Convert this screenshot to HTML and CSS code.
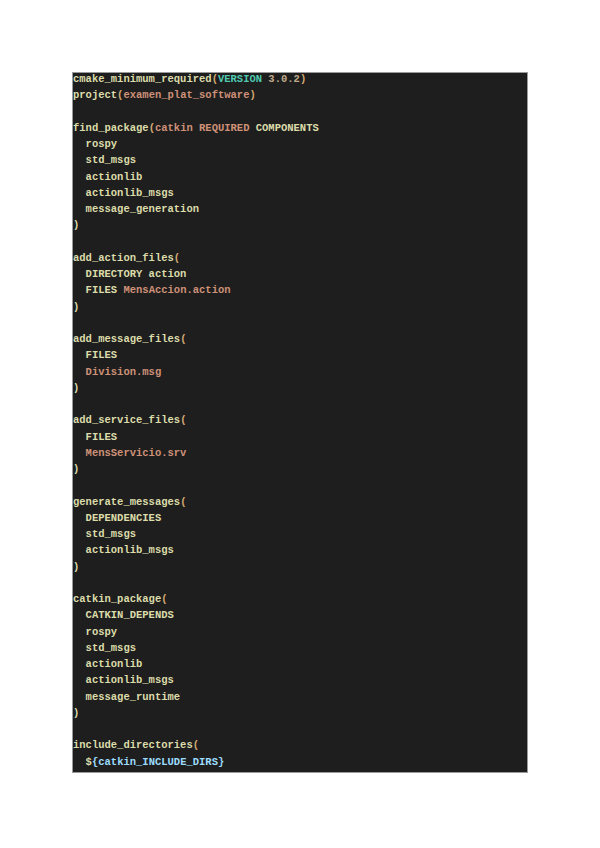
FILE: index.html
```html
<!DOCTYPE html>
<html lang="en">
<head>
<meta charset="utf-8">
<title>CMakeLists.txt</title>
<link rel="stylesheet" href="styles.css">
</head>
<body>
<div class="page">
<div class="code-box">
<pre class="code"><span class="fn">cmake_minimum_required</span><span class="p">(</span><span class="kw">VERSION</span> <span class="num">3.0.2</span><span class="p">)</span>
<span class="fn">project</span><span class="p">(</span><span class="str">examen_plat_software</span><span class="p">)</span>

<span class="fn">find_package</span><span class="p">(</span><span class="str">catkin REQUIRED</span> <span class="fn">COMPONENTS</span>
  <span class="fn">rospy</span>
  <span class="fn">std_msgs</span>
  <span class="fn">actionlib</span>
  <span class="fn">actionlib_msgs</span>
  <span class="fn">message_generation</span>
<span class="fn">)</span>

<span class="fn">add_action_files</span><span class="p">(</span>
  <span class="fn">DIRECTORY action</span>
  <span class="fn">FILES</span> <span class="str">MensAccion.action</span>
<span class="fn">)</span>

<span class="fn">add_message_files</span><span class="p">(</span>
  <span class="fn">FILES</span>
  <span class="str">Division.msg</span>
<span class="fn">)</span>

<span class="fn">add_service_files</span><span class="p">(</span>
  <span class="fn">FILES</span>
  <span class="str">MensServicio.srv</span>
<span class="fn">)</span>

<span class="fn">generate_messages</span><span class="p">(</span>
  <span class="fn">DEPENDENCIES</span>
  <span class="fn">std_msgs</span>
  <span class="fn">actionlib_msgs</span>
<span class="fn">)</span>

<span class="fn">catkin_package</span><span class="p">(</span>
  <span class="fn">CATKIN_DEPENDS</span>
  <span class="fn">rospy</span>
  <span class="fn">std_msgs</span>
  <span class="fn">actionlib</span>
  <span class="fn">actionlib_msgs</span>
  <span class="fn">message_runtime</span>
<span class="fn">)</span>

<span class="fn">include_directories</span><span class="p">(</span>
  <span class="fn">$</span><span class="var">{catkin_INCLUDE_DIRS}</span></pre>
</div>
</div>
</body>
</html>
```

FILE: styles.css
```css
html, body {
  margin: 0;
  padding: 0;
  background: #ffffff;
}

.page {
  padding: 72px 0 0 72px;
}

.code-box {
  width: 454px;
  height: 699px;
  background: #1e1e1e;
  border: 1px solid #9a9a9a;
  overflow: hidden;
}

.code {
  margin: -2px 0 0 0;
  padding: 0;
  font-family: "Liberation Mono", "DejaVu Sans Mono", monospace;
  font-size: 10.5px;
  font-weight: bold;
  line-height: 16.25px;
  color: #dcdcaa;
  white-space: pre;
}

.fn { color: #dcdcaa; }
.p { color: #d2a872; }
.kw { color: #4ec9b0; }
.num { color: #bfa98a; }
.str { color: #ce9178; }
.var { color: #9cdcfe; }
```
